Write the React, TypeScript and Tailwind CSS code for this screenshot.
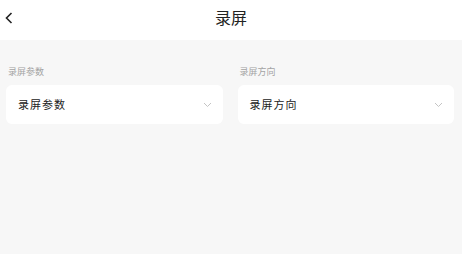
import React from 'react';

const font = { fontFamily: '"Noto Sans CJK SC", "Noto Sans", sans-serif' };

const ChevronDown = () => (
    <svg width="9" height="6" viewBox="0 0 9 6" fill="none">
        <path d="M1 1l3.5 3.5L8 1" stroke="#c4c4c4" strokeWidth="1" />
    </svg>
);

const SelectField = ({ label, value }: { label: string; value: string }) => (
    <div className="flex-1 flex flex-col">
        <div className="text-[9px] leading-[12px] text-[#a3a3a3] pl-[2px] mb-[7px]">{label}</div>
        <div className="h-[39px] bg-white rounded-[6px] flex items-center justify-between pl-[12px] pr-[11px]">
            <span className="text-[11px] tracking-[1px] text-[#222] pb-[1px]">{value}</span>
            <ChevronDown />
        </div>
    </div>
);

export default function App() {
    return (
        <div className="w-[462px] h-[254px] bg-[#f7f7f7] flex flex-col" style={font}>
            {/* Header */}
            <div className="h-[40px] bg-white flex items-center relative">
                <svg className="absolute left-[5px] top-[12px]" width="8" height="12" viewBox="0 0 8 12" fill="none">
                    <path d="M6.5 1L1.5 6l5 5" stroke="#222" strokeWidth="1.6" />
                </svg>
                <div className="flex-1 text-center text-[16px] text-[#222] leading-none pb-[6px]">录屏</div>
            </div>
            {/* Fields */}
            <div className="flex gap-[15px] px-[6px] pt-[26px] pr-[8px]">
                <SelectField label="录屏参数" value="录屏参数" />
                <SelectField label="录屏方向" value="录屏方向" />
            </div>
        </div>
    );
}
